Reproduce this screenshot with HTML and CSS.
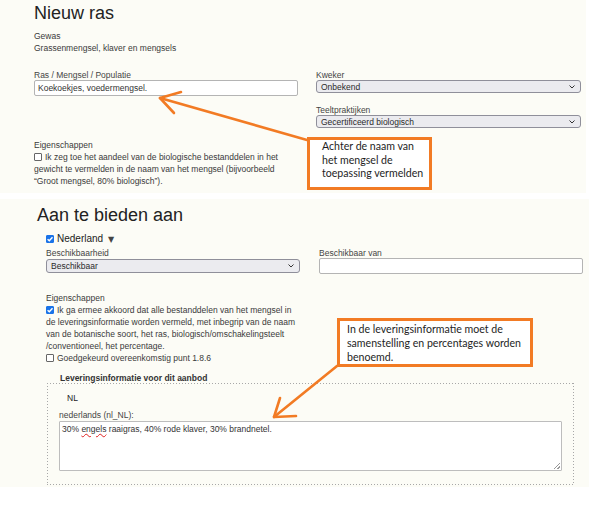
FILE: index.html
```html
<!DOCTYPE html>
<html lang="nl">
<head>
<meta charset="utf-8">
<title>Nieuw ras</title>
<link rel="stylesheet" href="styles.css">
</head>
<body>
<div class="page">
  <section class="panel panel-top">
    <h1 class="title">Nieuw ras</h1>
    <div class="info">
      <div>Gewas</div>
      <div>Grassenmengsel, klaver en mengsels</div>
    </div>
    <div class="cols cols-top">
      <div class="col">
        <div class="label">Ras / Mengsel / Populatie</div>
        <div class="input">Koekoekjes, voedermengsel.</div>
      </div>
      <div class="col">
        <div class="label">Kweker</div>
        <div class="select"><span>Onbekend</span><svg class="chev" width="6" height="4" viewBox="0 0 6 4"><path d="M0.5 0.5 L3 3 L5.5 0.5" fill="none" stroke="#333" stroke-width="1"/></svg></div>
        <div class="label label-gap">Teeltpraktijken</div>
        <div class="select"><span>Gecertificeerd biologisch</span><svg class="chev" width="6" height="4" viewBox="0 0 6 4"><path d="M0.5 0.5 L3 3 L5.5 0.5" fill="none" stroke="#333" stroke-width="1"/></svg></div>
      </div>
    </div>
    <div class="props props-top">
      <div>Eigenschappen</div>
      <div><span class="cb"></span>Ik zeg toe het aandeel van de biologische bestanddelen in het gewicht te vermelden in de naam van het mengsel (bijvoorbeeld “Groot mengsel, 80% biologisch”).</div>
    </div>
  </section>

  <section class="panel panel-bottom">
    <h1 class="title title-bottom">Aan te bieden aan</h1>
    <div class="offer">
      <div class="country"><span class="cb cb-on"><svg width="8" height="8" viewBox="0 0 8 8"><path d="M1.6 4.2 L3.3 5.8 L6.5 2.2" fill="none" stroke="#fff" stroke-width="1.4"/></svg></span>Nederland <span class="tri">▼</span></div>
      <div class="cols cols-bottom">
        <div class="col">
          <div class="label">Beschikbaarheid</div>
          <div class="select select-b"><span>Beschikbaar</span><svg class="chev" width="6" height="4" viewBox="0 0 6 4"><path d="M0.5 0.5 L3 3 L5.5 0.5" fill="none" stroke="#333" stroke-width="1"/></svg></div>
        </div>
        <div class="col">
          <div class="label">Beschikbaar van</div>
          <div class="input"></div>
        </div>
      </div>
      <div class="props props-bottom">
        <div>Eigenschappen</div>
        <div><span class="cb cb-on"><svg width="8" height="8" viewBox="0 0 8 8"><path d="M1.6 4.2 L3.3 5.8 L6.5 2.2" fill="none" stroke="#fff" stroke-width="1.4"/></svg></span>Ik ga ermee akkoord dat alle bestanddelen van het mengsel in de leveringsinformatie worden vermeld, met inbegrip van de naam van de botanische soort, het ras, biologisch/omschakelingsteelt<wbr>/conventioneel, het percentage.</div>
        <div><span class="cb"></span>Goedgekeurd overeenkomstig punt 1.8.6</div>
      </div>
      <fieldset class="delivery">
        <legend>Leveringsinformatie voor dit aanbod</legend>
        <div class="tab">NL</div>
        <div class="label lang">nederlands (nl_NL):</div>
        <div class="textarea">30% <span class="misspelled">engels</span> raaigras, 40% rode klaver, 30% brandnetel.<span class="grip"></span></div>
      </fieldset>
    </div>
  </section>

  <div class="callout callout-1">Achter de naam van het mengsel de toepassing vermelden</div>
  <div class="callout callout-2">In de leveringsinformatie moet de samenstelling en percentages worden benoemd.</div>

  <svg class="arrows" width="607" height="508" viewBox="0 0 607 508">
    <g fill="none" stroke="#f27b24" stroke-width="2.6" stroke-linecap="round" stroke-linejoin="round">
      <path d="M307 140 L160 98"/>
      <path d="M181 92 L160 98 L174 113"/>
      <path d="M337 366 L274 417"/>
      <path d="M280 398 L274 417 L296 416"/>
    </g>
  </svg>
</div>
</body>
</html>
```

FILE: styles.css
```css
* { box-sizing: border-box; }

html, body {
  margin: 0;
  padding: 0;
  background: #ffffff;
}

body {
  font-family: "Liberation Sans", Arial, sans-serif;
  font-size: 8.5px;
  color: #3a3a3a;
}

.page {
  position: relative;
  width: 607px;
  height: 508px;
  overflow: hidden;
}

.panel {
  background: #fcfcf6;
}

.panel-top {
  width: 586px;
  height: 193px;
  padding: 4px 0 0 34px;
}

.panel-bottom {
  width: 589px;
  height: 288px;
  margin-top: 6px;
  padding-top: 7px;
}

.title {
  margin: 0;
  font-size: 18px;
  line-height: 18px;
  font-weight: normal;
  color: #222;
}

.title-bottom {
  padding-left: 37px;
}

.info {
  margin-top: 8px;
  line-height: 12px;
}

.cols {
  display: grid;
}

.cols-top {
  grid-template-columns: 264px 265px;
  column-gap: 18px;
  margin-top: 17px;
}

.label {
  line-height: 9px;
  color: #444;
}

.label-gap {
  margin-top: 13px;
}

.input {
  height: 16px;
  border: 1px solid #b4b4b4;
  border-radius: 2px;
  background: #fff;
  padding: 0 3px;
  line-height: 14px;
  color: #333;
}

.select {
  height: 13px;
  border: 1px solid #8f8f9a;
  border-radius: 3px;
  background: #ebebef;
  padding: 0 5px 0 4px;
  display: flex;
  align-items: center;
  justify-content: space-between;
  color: #2a2a2a;
}

.chev {
  display: block;
}

.props {
  line-height: 12px;
}

.props-top {
  width: 264px;
  margin-top: 11px;
}

.cb {
  display: inline-block;
  width: 8px;
  height: 8px;
  margin-right: 3px;
  border: 1px solid #666;
  border-radius: 1px;
  background: #fff;
  vertical-align: -1px;
  position: relative;
}

.cb-on {
  border-color: #1a73e8;
  background: #1a73e8;
}

.cb-on svg {
  position: absolute;
  left: -1px;
  top: -1px;
}

.offer {
  padding-left: 46px;
}

.country {
  margin-top: 9px;
  font-size: 10px;
  line-height: 12px;
  color: #222;
}

.tri {
  font-family: "DejaVu Sans", sans-serif;
  font-size: 8px;
  color: #444;
  margin-left: 2px;
}

.cols-bottom {
  grid-template-columns: 254px 264px;
  column-gap: 19px;
  margin-top: 2px;
}

.cols-bottom .label {
  line-height: 10px;
}

.select-b {
  height: 14px;
  margin-top: 1px;
}

.props-bottom {
  width: 254px;
  margin-top: 17.5px;
}

.delivery {
  width: 527px;
  margin: 9.5px 0 0 1px;
  padding: 8.5px 12px 14px 12px;
  border: none;
  min-inline-size: 0;
  background:
    repeating-linear-gradient(to right, #a8a8a8 0 1px, transparent 1px 3px) left 0 top 5px / 100% 1px no-repeat,
    repeating-linear-gradient(to right, #a8a8a8 0 1px, transparent 1px 3px) left 0 bottom 0 / 100% 1px no-repeat,
    repeating-linear-gradient(to bottom, #a8a8a8 0 1px, transparent 1px 3px) left 0 top 5px / 1px calc(100% - 5px) no-repeat,
    repeating-linear-gradient(to bottom, #a8a8a8 0 1px, transparent 1px 3px) right 0 top 5px / 1px calc(100% - 5px) no-repeat;
}

.delivery legend {
  padding: 0 7px 0 1px;
  font-weight: bold;
  line-height: 10px;
  color: #333;
  background: #fcfcf6;
}

.tab {
  padding-left: 8px;
  line-height: 12px;
  color: #222;
}

.lang {
  margin-top: 6.5px;
  line-height: 10px;
}

.textarea {
  position: relative;
  height: 50px;
  margin-top: 1px;
  border: 1px solid #bdbdbd;
  border-radius: 1px;
  background: #fff;
  padding: 1px 2px;
  line-height: 12px;
  color: #333;
}

.misspelled {
  text-decoration: underline wavy #e02020;
  text-decoration-thickness: 1px;
  text-underline-offset: 1px;
}

.grip {
  position: absolute;
  right: 1px;
  bottom: 1px;
  width: 8px;
  height: 8px;
  background: repeating-linear-gradient(135deg, transparent 0 1.5px, #999 1.5px 2.5px);
  clip-path: polygon(100% 0, 100% 100%, 0 100%);
}

.callout {
  position: absolute;
  font-family: Lato, "Open Sans", sans-serif;
  font-size: 10.6px;
  color: #1e1e1e;
  background: #fff;
  border: 3px solid #f27b24;
}

.callout-1 {
  left: 307px;
  top: 137px;
  width: 125px;
  height: 53px;
  padding: 0 2px 0 12px;
  line-height: 13.5px;
}

.callout-2 {
  left: 337px;
  top: 318px;
  width: 196px;
  height: 49px;
  padding: 1px 6px 0 7px;
  line-height: 14px;
}

.arrows {
  position: absolute;
  left: 0;
  top: 0;
  pointer-events: none;
}
```
